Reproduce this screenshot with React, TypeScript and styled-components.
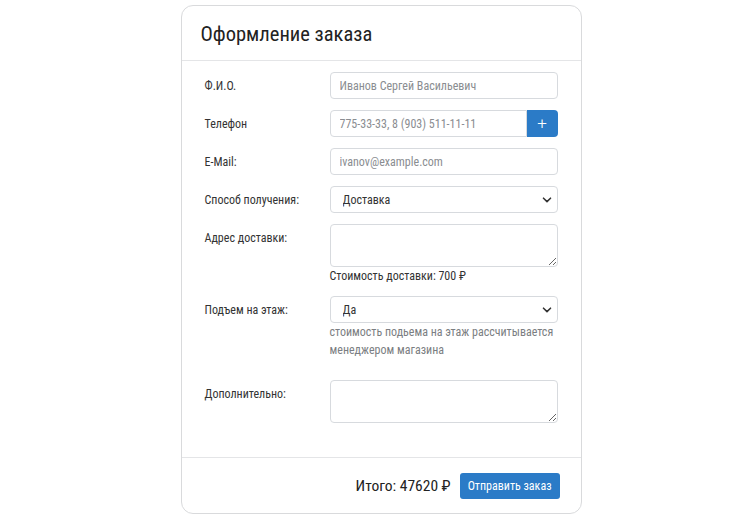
import React from "react";
import styled, { createGlobalStyle } from "styled-components";

const GlobalStyle = createGlobalStyle`
  body {
    margin: 0;
    background: #ffffff;
    font-family: "Roboto Condensed", Roboto, "Liberation Sans", sans-serif;
    color: #333333;
  }
`;

const Page = styled.div`
  display: flex;
  justify-content: center;
  padding: 5px 0 0 10px;
`;

const Card = styled.div`
  width: 401px;
  box-sizing: border-box;
  border: 1px solid #d9dadc;
  border-radius: 12px;
  background: #fff;
`;

const CardHeader = styled.div`
  height: 54px;
  display: flex;
  align-items: center;
  padding: 0 19px;
  border-bottom: 1px solid #e4e5e7;
`;

const Title = styled.h2`
  margin: 2px 0 0;
  font-size: 20.5px;
  font-weight: 400;
  color: #222;
`;

const CardBody = styled.div`
  display: flex;
  flex-direction: column;
  gap: 11px;
  padding: 11px 23px 34px;
`;

const FieldRow = styled.div`
  display: grid;
  grid-template-columns: 125px 228px;
  align-items: start;
`;

const Label = styled.label`
  font-size: 12px;
  line-height: 28px;
  height: 27px;
  color: #333;
`;

const Field = styled.div`
  display: flex;
  flex-direction: column;
`;

const Input = styled.input`
  box-sizing: border-box;
  width: 100%;
  height: 27px;
  padding: 0 9px;
  border: 1px solid #d7dade;
  border-radius: 4px;
  font-family: inherit;
  font-size: 12px;
  color: #333;
  outline: none;
  &::placeholder {
    color: #8a8d91;
  }
`;

const InputGroup = styled.div`
  display: flex;
  ${Input} {
    border-radius: 4px 0 0 4px;
    flex: 1;
  }
`;

const AddButton = styled.button`
  width: 31px;
  height: 27px;
  border: none;
  border-radius: 0 4px 4px 0;
  background: #2b7bc7;
  color: #fff;
  font-size: 17px;
  line-height: 1;
  padding: 0;
  font-family: Roboto, sans-serif;
  font-weight: 300;
`;

const SelectBox = styled.div`
  position: relative;
`;

const Select = styled.select`
  box-sizing: border-box;
  width: 100%;
  height: 27px;
  padding: 0 12px;
  border: 1px solid #d7dade;
  border-radius: 4px;
  background: #fff;
  font-family: inherit;
  font-size: 12px;
  color: #333;
  appearance: none;
  outline: none;
`;

const Chevron = styled.svg`
  position: absolute;
  right: 6px;
  top: 10px;
  pointer-events: none;
`;

const TextArea = styled.textarea<{ $h: number }>`
  box-sizing: border-box;
  width: 100%;
  height: ${(p) => p.$h}px;
  border: 1px solid #d7dade;
  border-radius: 4px;
  font-family: inherit;
  resize: vertical;
  outline: none;
  display: block;
`;

const Hint = styled.div<{ $muted?: boolean; $gapAfter?: number }>`
  font-size: 12px;
  line-height: 18px;
  color: ${(p) => (p.$muted ? "#7b7e82" : "#333")};
  margin-bottom: ${(p) => p.$gapAfter ?? 0}px;
`;

const CardFooter = styled.div`
  display: flex;
  justify-content: flex-end;
  align-items: center;
  gap: 9px;
  padding: 15px 21px 14px;
  border-top: 1px solid #e4e5e7;
`;

const Total = styled.span`
  font-size: 15.5px;
  color: #222;
`;

const SubmitButton = styled.button`
  height: 26px;
  padding: 0 8px;
  border: none;
  border-radius: 3px;
  background: #2b7bc7;
  color: #fff;
  font-family: inherit;
  font-size: 12px;
`;

const ChevronIcon = () => (
  <Chevron width="10" height="8" viewBox="0 0 10 8">
    <path d="M1.5 2.2 5 5.6 8.5 2.2" fill="none" stroke="#333" strokeWidth="1.6" strokeLinecap="round" strokeLinejoin="round" />
  </Chevron>
);

export default function App() {
  return (
    <>
      <GlobalStyle />
      <Page>
        <Card>
          <CardHeader>
            <Title>Оформление заказа</Title>
          </CardHeader>
          <CardBody>
            <FieldRow>
              <Label>Ф.И.О.</Label>
              <Input placeholder="Иванов Сергей Васильевич" />
            </FieldRow>
            <FieldRow>
              <Label>Телефон</Label>
              <InputGroup>
                <Input placeholder="775-33-33, 8 (903) 511-11-11" />
                <AddButton>+</AddButton>
              </InputGroup>
            </FieldRow>
            <FieldRow>
              <Label>E-Mail:</Label>
              <Input placeholder="ivanov@example.com" />
            </FieldRow>
            <FieldRow>
              <Label>Способ получения:</Label>
              <SelectBox>
                <Select defaultValue="delivery">
                  <option value="delivery">Доставка</option>
                  <option value="pickup">Самовывоз</option>
                </Select>
                <ChevronIcon />
              </SelectBox>
            </FieldRow>
            <FieldRow>
              <Label>Адрес доставки:</Label>
              <Field>
                <TextArea $h={43} />
                <Hint>Стоимость доставки: 700 ₽</Hint>
              </Field>
            </FieldRow>
            <FieldRow>
              <Label>Подъем на этаж:</Label>
              <Field>
                <SelectBox>
                  <Select defaultValue="yes">
                    <option value="yes">Да</option>
                    <option value="no">Нет</option>
                  </Select>
                  <ChevronIcon />
                </SelectBox>
                <Hint $muted $gapAfter={10}>
                  стоимость подьема на этаж рассчитывается менеджером магазина
                </Hint>
              </Field>
            </FieldRow>
            <FieldRow>
              <Label>Дополнительно:</Label>
              <TextArea $h={43} />
            </FieldRow>
          </CardBody>
          <CardFooter>
            <Total>Итого: 47620 ₽</Total>
            <SubmitButton>Отправить заказ</SubmitButton>
          </CardFooter>
        </Card>
      </Page>
    </>
  );
}
